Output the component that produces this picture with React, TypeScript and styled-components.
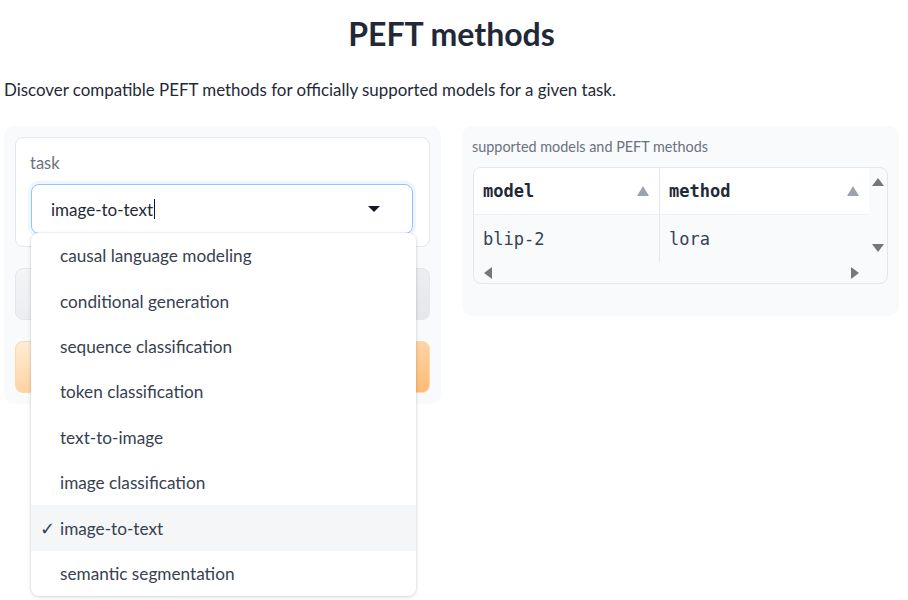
import React from "react";
import styled, { createGlobalStyle } from "styled-components";

const Global = createGlobalStyle`
  html, body { margin: 0; padding: 0; background: #ffffff; }
  body { font-family: Lato, "Noto Sans", sans-serif; color: #1f2937; }
  #root { min-height: 600px; }
  * { box-sizing: border-box; }
`;

const Page = styled.div`
  width: 895px;
  min-height: 600px;
  margin-left: 4px;
  padding-top: 12px;
`;

const Title = styled.h1`
  margin: 0;
  text-align: center;
  font-size: 32px;
  font-weight: 700;
  line-height: 44px;
  color: #1f2937;
`;

const Desc = styled.p`
  margin: 22px 0 0 0;
  font-size: 16.9px;
  line-height: 24px;
  color: #1f2937;
`;

const Row = styled.div`
  display: flex;
  gap: 21px;
  margin-top: 24px;
  align-items: flex-start;
`;

const Panel = styled.div<{ $pb?: number }>`
  flex: 1;
  background: #f9fafb;
  border-radius: 10px;
  padding: 11px 11px ${(p) => p.$pb ?? 11}px 11px;
  display: flex;
  flex-direction: column;
  gap: 21px;
`;

const Block = styled.div`
  background: #ffffff;
  border: 1px solid #e5e7eb;
  border-radius: 8px;
  padding: 14px 16px 12px 14px;
  display: flex;
  flex-direction: column;
  gap: 10px;
`;

const Label = styled.span`
  font-size: 16.5px;
  line-height: 22px;
  color: #6b7280;
`;

const Field = styled.div`
  position: relative;
`;

const Input = styled.div`
  height: 50px;
  border: 1px solid #93c5fd;
  box-shadow: 0 0 0 3px #eff6ff;
  border-radius: 8px;
  background: #fff;
  display: flex;
  align-items: center;
  padding: 0 32px 0 19px;
  margin-left: 1px;
  font-size: 17px;
  color: #1f2937;
`;

const Caret = styled.span`
  display: inline-block;
  width: 1px;
  height: 20px;
  background: #111827;
  margin-left: 1px;
`;

const Spacer = styled.div`
  flex: 1;
`;

const Menu = styled.ul`
  position: absolute;
  left: 1px;
  top: 49px;
  width: 385px;
  margin: 0;
  padding: 0;
  list-style: none;
  background: #ffffff;
  border-radius: 8px;
  box-shadow: 0 1px 4px rgba(0, 0, 0, 0.14), 0 0 0 1px rgba(0, 0, 0, 0.03);
  z-index: 10;
  overflow: hidden;
`;

const Item = styled.li<{ $sel?: boolean }>`
  height: 45.4px;
  display: flex;
  align-items: center;
  padding-left: 29px;
  position: relative;
  font-size: 17.2px;
  color: #374151;
  background: ${(p) => (p.$sel ? "#f5f6f8" : "transparent")};
`;

const Check = styled.span`
  position: absolute;
  left: 9px;
  font-family: "DejaVu Sans", sans-serif;
  font-size: 18px;
  color: #374151;
`;

const Button = styled.button<{ $primary?: boolean }>`
  height: 52px;
  border-radius: 8px;
  border: 1px solid ${(p) => (p.$primary ? "#fed7aa" : "#e5e7eb")};
  background: ${(p) =>
    p.$primary
      ? "linear-gradient(to bottom right, #ffedd5, #fdba74)"
      : "linear-gradient(to bottom right, #f3f4f6, #e5e7eb)"};
`;

const SmallLabel = styled.span`
  font-size: 14.4px;
  line-height: 20px;
  color: #6b7280;
  margin-left: -1px;
`;

const TableBox = styled.div`
  margin-top: -11px;
  border: 1px solid #e5e7eb;
  border-radius: 8px;
  overflow: hidden;
  display: grid;
  grid-template-columns: 186px 209px 1fr;
  grid-template-rows: 47px 47px 21px;
  background: #f9fafb;
`;

const HeadCell = styled.div<{ $last?: boolean }>`
  background: #ffffff;
  display: flex;
  align-items: center;
  padding: 0 10px 0 9px;
  border-right: ${(p) => (p.$last ? "none" : "1px solid #e5e7eb")};
  border-bottom: 1px solid #f0f1f3;
  font-family: "DejaVu Sans Mono", "Liberation Mono", monospace;
  font-weight: 700;
  font-size: 17px;
  color: #1f2937;
`;

const Cell = styled.div<{ $last?: boolean }>`
  display: flex;
  align-items: center;
  padding: 0 10px 0 9px;
  border-right: ${(p) => (p.$last ? "none" : "1px solid #e5e7eb")};
  font-family: "DejaVu Sans Mono", "Liberation Mono", monospace;
  font-size: 17px;
  color: #374151;
`;

const VScroll = styled.div`
  grid-column: 3;
  grid-row: 1 / span 2;
  display: flex;
  flex-direction: column;
  justify-content: space-between;
  align-items: center;
  padding: 10px 0 10px 0;
`;

const HScroll = styled.div`
  grid-column: 1 / span 2;
  grid-row: 3;
  display: flex;
  justify-content: space-between;
  align-items: center;
  padding: 0 10px 0 10px;
`;

const Tri = ({ dir, color, w, h }: { dir: "up" | "down" | "left" | "right"; color: string; w: number; h: number }) => {
  const pts: Record<string, string> = {
    up: `${w / 2},0 ${w},${h} 0,${h}`,
    down: `0,0 ${w},0 ${w / 2},${h}`,
    left: `${w},0 ${w},${h} 0,${h / 2}`,
    right: `0,0 ${w},${h / 2} 0,${h}`,
  };
  return (
    <svg width={w} height={h} viewBox={`0 0 ${w} ${h}`} style={{ display: "block" }}>
      <polygon points={pts[dir]} fill={color} />
    </svg>
  );
};

const options = [
  "causal language modeling",
  "conditional generation",
  "sequence classification",
  "token classification",
  "text-to-image",
  "image classification",
  "image-to-text",
  "semantic segmentation",
];

export default function App() {
  return (
    <>
      <Global />
      <Page>
        <Title>PEFT methods</Title>
        <Desc>Discover compatible PEFT methods for officially supported models for a given task.</Desc>
        <Row>
          <Panel>
            <Block>
              <Label>task</Label>
              <Field>
                <Input>
                  image-to-text
                  <Caret />
                  <Spacer />
                  <Tri dir="down" color="#111827" w={12} h={6} />
                </Input>
                <Menu>
                  {options.map((o) => (
                    <Item key={o} $sel={o === "image-to-text"}>
                      {o === "image-to-text" && <Check>✓</Check>}
                      {o}
                    </Item>
                  ))}
                </Menu>
              </Field>
            </Block>
            <Button aria-label="clear" />
            <Button $primary aria-label="submit" />
          </Panel>
          <Panel $pb={32}>
            <SmallLabel>supported models and PEFT methods</SmallLabel>
            <TableBox>
              <HeadCell>
                model
                <Spacer />
                <Tri dir="up" color="#9ca3af" w={12} h={10} />
              </HeadCell>
              <HeadCell $last>
                method
                <Spacer />
                <Tri dir="up" color="#9ca3af" w={12} h={10} />
              </HeadCell>
              <VScroll>
                <Tri dir="up" color="#777" w={12} h={8} />
                <Tri dir="down" color="#777" w={12} h={8} />
              </VScroll>
              <Cell>blip-2</Cell>
              <Cell $last>lora</Cell>
              <HScroll>
                <Tri dir="left" color="#777" w={8} h={12} />
                <Tri dir="right" color="#777" w={8} h={12} />
              </HScroll>
            </TableBox>
          </Panel>
        </Row>
      </Page>
    </>
  );
}
